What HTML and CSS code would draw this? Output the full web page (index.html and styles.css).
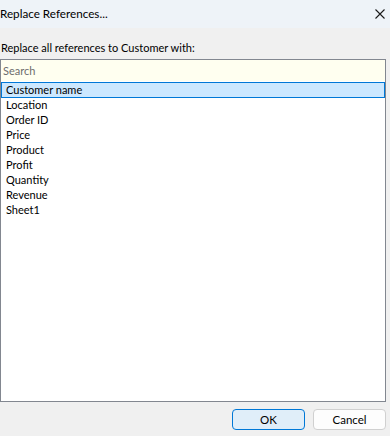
FILE: index.html
```html
<!DOCTYPE html>
<html lang="en">
<head>
    <meta charset="UTF-8">
    <title>Replace References</title>
    <link rel="stylesheet" href="styles.css">
</head>
<body>
    <div class="dialog">
        <div class="titlebar">
            <span class="title">Replace References...</span>
            <svg class="close" width="10" height="10" viewBox="0 0 10 10">
                <path d="M0.5 0.5 L9.5 9.5 M9.5 0.5 L0.5 9.5" stroke="#1a1a1a" stroke-width="1.1" fill="none"/>
            </svg>
        </div>

        <div class="body">
            <label class="prompt">Replace all references to Customer with:</label>

            <div class="picker">
                <input class="search" type="text" placeholder="Search">
                <ul class="field-list" id="fields"></ul>
            </div>

            <div class="buttons">
                <button class="btn btn-default">OK</button>
                <button class="btn">Cancel</button>
            </div>
        </div>
    </div>

    <script>
        const fields = ['Customer name', 'Location', 'Order ID', 'Price', 'Product', 'Profit', 'Quantity', 'Revenue', 'Sheet1'];

        const list = document.getElementById('fields');
        fields.forEach((name, i) => {
            const li = document.createElement('li');
            li.textContent = name;
            if (i === 0) li.className = 'selected';
            list.appendChild(li);
        });
    </script>
</body>
</html>
```

FILE: styles.css
```css
* {
    margin: 0;
    padding: 0;
    box-sizing: border-box;
}

body {
    font-family: Lato, "Noto Sans", sans-serif;
    font-size: 11px;
    color: #000;
    background: #f0f0f0;
    width: 390px;
    height: 436px;
    overflow: hidden;
}

/* Title bar */
.titlebar {
    height: 28px;
    background: #eef3f8;
    display: flex;
    align-items: center;
    justify-content: space-between;
    padding: 0 5px 0 0;
}

.title {
    font-size: 11.7px;
    line-height: 14px;
    margin-top: -2px;
}

.close {
    margin-top: -1px;
}

/* Body */
.body {
    padding: 12px 4px 0 0;
}

.prompt {
    display: block;
    height: 19px;
    line-height: 15px;
    padding-left: 1px;
}

.picker {
    height: 343px;
    border: 1px solid #828790;
    background: #fff;
    display: flex;
    flex-direction: column;
}

.search {
    height: 22px;
    border: none;
    border-bottom: 1px solid #fff;
    background: #fffff0;
    font-family: inherit;
    font-size: 11px;
    padding: 0 2px;
    outline: none;
}

.search::placeholder {
    color: #6d6d6d;
}

.field-list {
    list-style: none;
}

.field-list li {
    height: 15px;
    line-height: 14px;
    padding-left: 4px;
    border: 1px solid transparent;
    border-top: 0;
    border-bottom: 0;
}

.field-list li.selected {
    height: 16px;
    background: #cce8ff;
    border: 1px solid #0078d7;
}

/* Buttons */
.buttons {
    display: flex;
    justify-content: flex-end;
    gap: 8px;
    padding-top: 7px;
}

.btn {
    width: 73px;
    height: 21px;
    border: 1px solid #d0d0d0;
    border-radius: 4px;
    background: #fdfdfd;
    font-family: inherit;
    font-size: 11.5px;
    color: #000;
}

.btn-default {
    border-color: #0078d7;
    background: #e0eef9;
}
```
